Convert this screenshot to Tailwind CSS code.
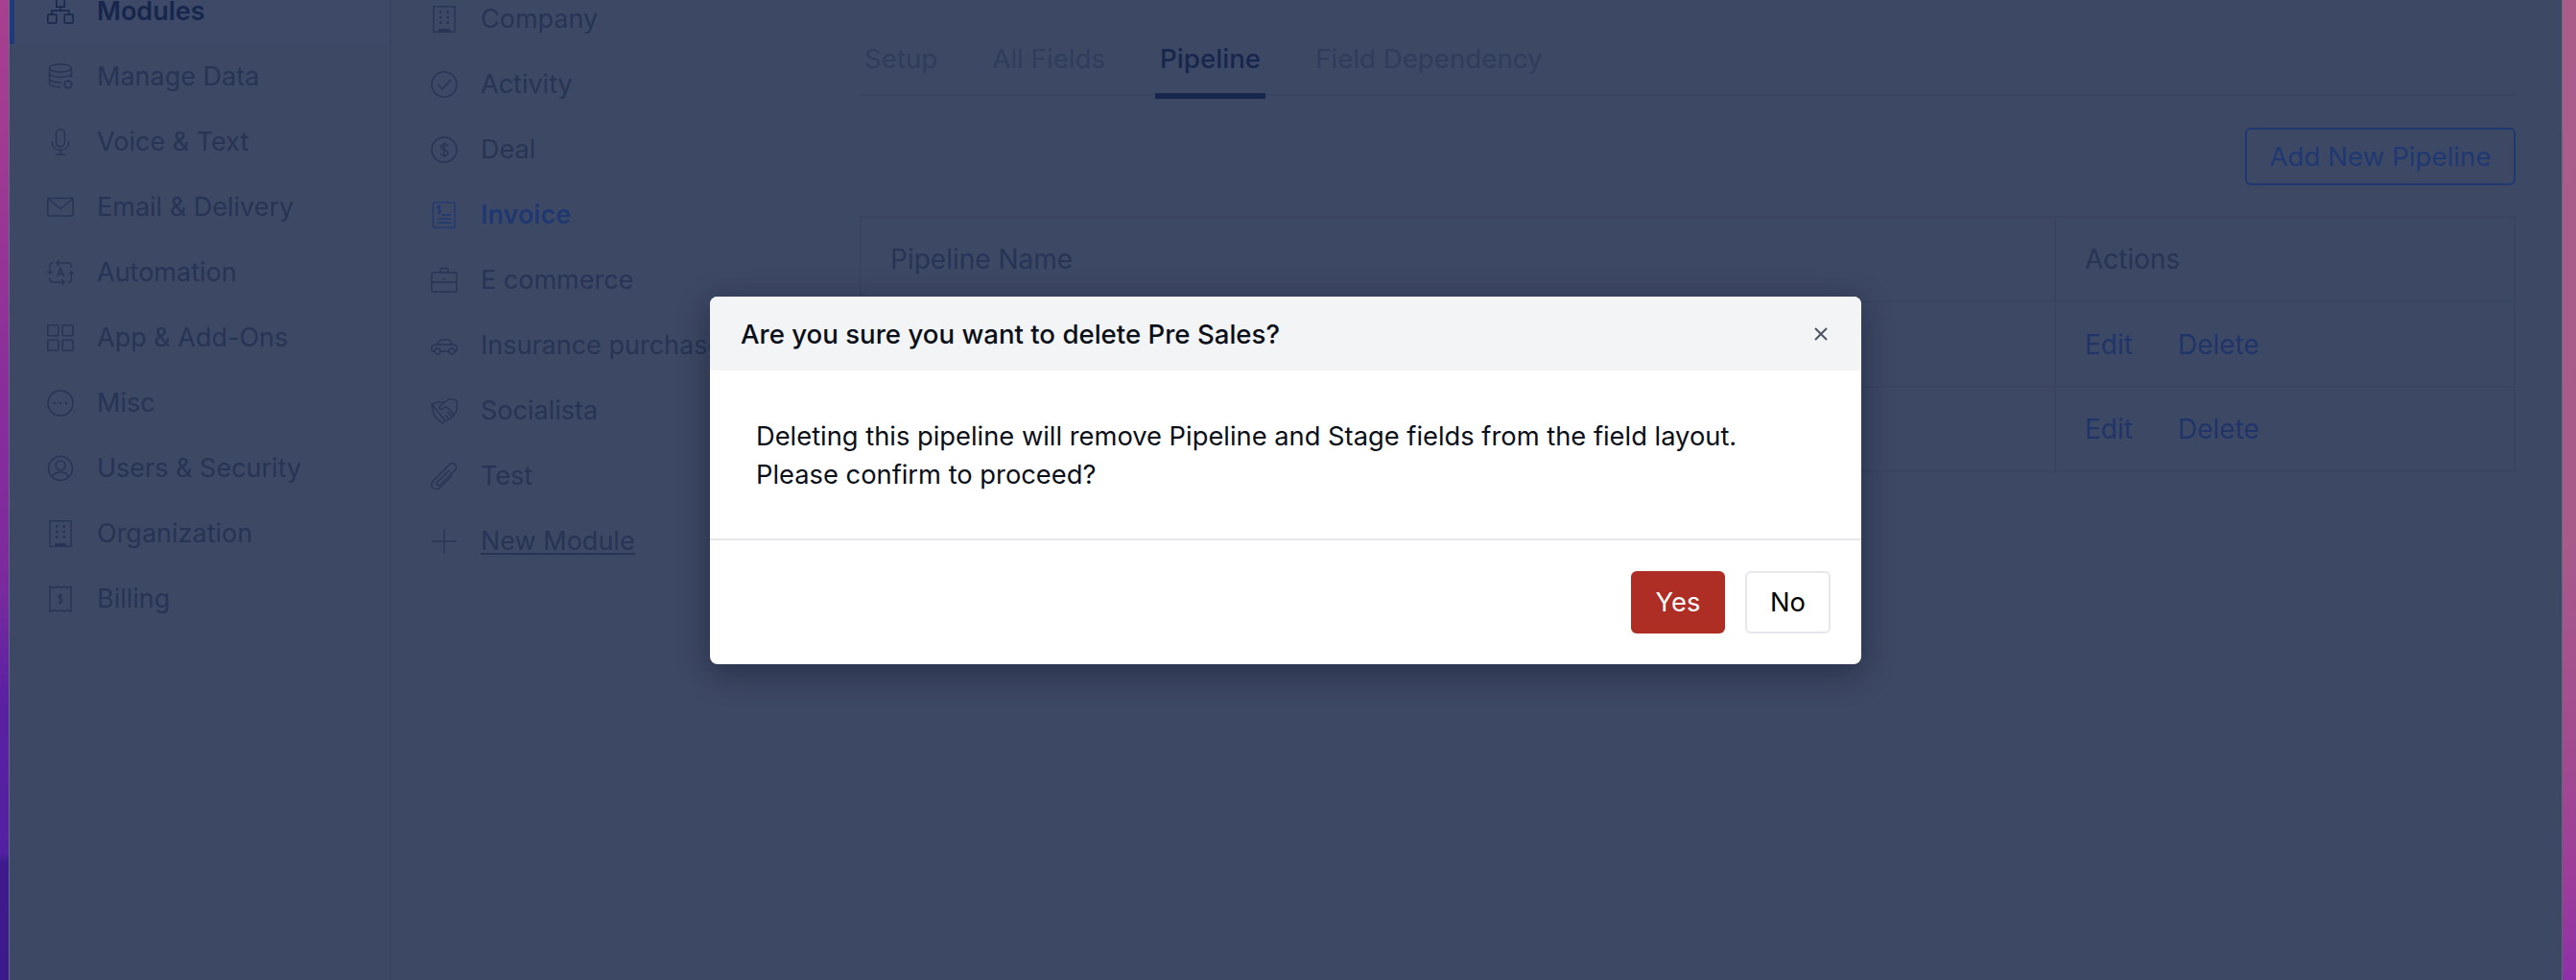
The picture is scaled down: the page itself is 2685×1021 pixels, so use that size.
<!DOCTYPE html>
<html lang="en">
<head>
    <meta charset="UTF-8">
    <meta name="viewport" content="width=device-width, initial-scale=1.0">
    <title>Pipeline settings</title>
    <script src="https://cdn.jsdelivr.net/npm/@tailwindcss/browser@4"></script>
</head>
<body class="font-['Inter',sans-serif] text-[27px] leading-[40px]">
    <div class="relative flex h-[1021px] w-[2685px] overflow-hidden">
        <!-- Wallpaper left -->
        <div class="w-[9px] shrink-0 bg-[linear-gradient(to_bottom,#a83f8f_0%,#a23a92_14%,#8a2d9c_40%,#7a2a9e_60%,#5a20a4_72%,#5420a2_87%,#3f1a8e_88%,#3d1a8c_100%)]"></div>

        <!-- App panel -->
        <div class="flex flex-1 bg-[#3d4864] border-l border-r border-l-[#5f7089] border-r-[#5e6a7a]">
            <!-- Settings nav -->
            <nav class="w-[398px] shrink-0 border-r-2 border-[#3a4460] text-[#273455]">
                <div class="-mt-[22px]">
                    <div class="flex items-center h-[68px] pl-[34px] gap-[24px] border-l-[5px] border-[#1f3a78] bg-[#3d4967] font-semibold text-[#17264c]">
                        <svg class="w-[28px] h-[28px] shrink-0 fill-none stroke-current stroke-[1.5]" viewBox="0 0 28 28"><rect x="9.8" y="0.8" width="8.4" height="8.4"/><path d="M14 9.2V13M5 17V13H23V17"/><rect x="0.8" y="17" width="9" height="9" rx="1"/><rect x="18.2" y="17" width="9" height="9" rx="1"/></svg>
                        <span>Modules</span>
                    </div>
                    <div class="flex items-center h-[68px] pl-[39px] gap-[24px]">
                        <svg class="w-[28px] h-[28px] shrink-0 fill-none stroke-current stroke-[1.4]" viewBox="0 0 28 28"><ellipse cx="14" cy="5" rx="11.5" ry="4"/><path d="M2.5 5V21C2.5 23 6 24.4 14 25M25.5 5V15M2.5 10.5C2.5 13 8 14.5 14 14.5S25.5 13 25.5 10.5M2.5 16C2.5 18.5 8 20 15 20"/><circle cx="22" cy="22" r="3.5"/><path d="M22 17V18.5M22 25.5V27M17 22H18.5M25.5 22H27M18.6 18.6L19.6 19.6M24.4 24.4L25.4 25.4M18.6 25.4L19.6 24.4M24.4 19.6L25.4 18.6"/></svg>
                        <span>Manage Data</span>
                    </div>
                    <div class="flex items-center h-[68px] pl-[39px] gap-[24px]">
                        <svg class="w-[28px] h-[28px] shrink-0 fill-none stroke-current stroke-[1.4]" viewBox="0 0 28 28"><rect x="9.5" y="0.8" width="9" height="18" rx="4.5"/><path d="M5.5 13V15C5.5 19.5 9 22.3 14 22.3S22.5 19.5 22.5 15V13M14 22.3V27M8.5 27H19.5"/></svg>
                        <span>Voice &amp; Text</span>
                    </div>
                    <div class="flex items-center h-[68px] pl-[39px] gap-[24px]">
                        <svg class="w-[28px] h-[28px] shrink-0 fill-none stroke-current stroke-[1.5]" viewBox="0 0 28 28"><rect x="0.8" y="4.5" width="26.4" height="18.5" rx="1.5"/><path d="M1.5 5.5L14 15.5L26.5 5.5"/></svg>
                        <span>Email &amp; Delivery</span>
                    </div>
                    <div class="flex items-center h-[68px] pl-[39px] gap-[24px]">
                        <svg class="w-[28px] h-[28px] shrink-0 fill-none stroke-current stroke-[1.3]" viewBox="0 0 28 28"><path d="M10 4H22C25 4 25.5 6 25.5 9M12.5 1L10 4L12.5 7M18 24H6C3 24 3 22 3 19M15.5 27L18 24L15.5 21M3 15V7C3 5 4 4 6 4M0.5 12.5L3 15L5.5 12.5M25.5 13V21C25.5 23 25 24 22 24M23 15.5L25.5 13L28 15.5"/><path d="M10.5 18.5L14 9.5L17.5 18.5M11.7 15.5H16.3"/></svg>
                        <span>Automation</span>
                    </div>
                    <div class="flex items-center h-[68px] pl-[39px] gap-[24px]">
                        <svg class="w-[28px] h-[28px] shrink-0 fill-none stroke-current stroke-[1.5]" viewBox="0 0 28 28"><rect x="0.8" y="0.8" width="11" height="11" rx="1"/><rect x="16.2" y="0.8" width="11" height="11" rx="1"/><rect x="0.8" y="16.2" width="11" height="11" rx="1"/><rect x="16.2" y="16.2" width="11" height="11" rx="1"/></svg>
                        <span>App &amp; Add-Ons</span>
                    </div>
                    <div class="flex items-center h-[68px] pl-[39px] gap-[24px]">
                        <svg class="w-[28px] h-[28px] shrink-0 fill-none stroke-current stroke-[1.5]" viewBox="0 0 28 28"><circle cx="14" cy="14" r="13"/><g class="fill-current stroke-0"><circle cx="8" cy="14" r="1.3"/><circle cx="14" cy="14" r="1.3"/><circle cx="20" cy="14" r="1.3"/></g></svg>
                        <span>Misc</span>
                    </div>
                    <div class="flex items-center h-[68px] pl-[39px] gap-[24px]">
                        <svg class="w-[28px] h-[28px] shrink-0 fill-none stroke-current stroke-[1.5]" viewBox="0 0 28 28"><circle cx="14" cy="14" r="12.5"/><circle cx="14" cy="11" r="5"/><path d="M5.5 23C7 19 10 18 14 18S21 19 22.5 23"/></svg>
                        <span>Users &amp; Security</span>
                    </div>
                    <div class="flex items-center h-[68px] pl-[39px] gap-[24px]">
                        <svg class="w-[28px] h-[28px] shrink-0 fill-none stroke-current stroke-[1.4]" viewBox="0 0 28 28"><rect x="3" y="0.8" width="22" height="26.4"/><path d="M8 25.5H20" class="stroke-[3]"/><path d="M9 6.5H11.5M16.5 6.5H19M9 12H11.5M16.5 12H19M9 17.5H11.5M16.5 17.5H19" class="stroke-[2.6]"/></svg>
                        <span>Organization</span>
                    </div>
                    <div class="flex items-center h-[68px] pl-[39px] gap-[24px]">
                        <svg class="w-[28px] h-[28px] shrink-0 fill-none stroke-current stroke-[1.4]" viewBox="0 0 28 28"><path d="M3 1L7 2.5L11 1L14 2.5L18 1L21 2.5L25 1V27L21 25.5L18 27L14 25.5L11 27L7 25.5L3 27Z"/><path d="M16 10.5C15 9.5 12 9.5 12 11.5S16 13.5 16 15.7S13 18.5 12 17.5M14 8.5V19.5"/></svg>
                        <span>Billing</span>
                    </div>
                </div>
            </nav>

            <!-- Module list -->
            <aside class="w-[488px] shrink-0 text-[#273455]">
                <div class="-mt-[14px] whitespace-nowrap">
                    <div class="flex items-center h-[68px] pl-[41px] gap-[24px]">
                        <svg class="w-[28px] h-[28px] shrink-0 fill-none stroke-current stroke-[1.4]" viewBox="0 0 28 28"><rect x="3" y="0.8" width="22" height="26.4"/><path d="M8 25.5H20" class="stroke-[3]"/><path d="M9 6.5H11.5M16.5 6.5H19M9 12H11.5M16.5 12H19M9 17.5H11.5M16.5 17.5H19" class="stroke-[2.6]"/></svg>
                        <span>Company</span>
                    </div>
                    <div class="flex items-center h-[68px] pl-[41px] gap-[24px]">
                        <svg class="w-[28px] h-[28px] shrink-0 fill-none stroke-current stroke-[1.4]" viewBox="0 0 28 28"><circle cx="14" cy="14" r="13"/><path d="M8 14.5L12 19L21 9"/></svg>
                        <span>Activity</span>
                    </div>
                    <div class="flex items-center h-[68px] pl-[41px] gap-[24px]">
                        <svg class="w-[28px] h-[28px] shrink-0 fill-none stroke-current stroke-[1.4]" viewBox="0 0 28 28"><circle cx="14" cy="14" r="13"/><path d="M18 10C17 8 10.5 8 10.5 11S18 14 18 17.5S11 20.5 10 18M14 6V22"/></svg>
                        <span>Deal</span>
                    </div>
                    <div class="flex items-center h-[68px] pl-[41px] gap-[24px] font-semibold text-[#1f3872]">
                        <svg class="w-[28px] h-[28px] shrink-0 fill-none stroke-current stroke-[1.3]" viewBox="0 0 28 28"><rect x="2.5" y="0.8" width="22.5" height="26.4" rx="1"/><path d="M10.5 5.5C9.5 4.5 7 4.5 7 6.3S10.5 8 10.5 10S8 12.3 7 11.3M8.8 3.5V13.5M11 14H21M7 18H21.5M7 22H21.5"/></svg>
                        <span>Invoice</span>
                    </div>
                    <div class="flex items-center h-[68px] pl-[41px] gap-[24px]">
                        <svg class="w-[28px] h-[28px] shrink-0 fill-none stroke-current stroke-[1.4]" viewBox="0 0 28 28"><rect x="1" y="6" width="26" height="20" rx="1.5"/><path d="M10 6V3C10 2 10.5 1.5 11.5 1.5H16.5C17.5 1.5 18 2 18 3V6M1 16H27M12.5 13H15.5"/></svg>
                        <span>E commerce</span>
                    </div>
                    <div class="flex items-center h-[68px] pl-[41px] gap-[24px]">
                        <svg class="w-[28px] h-[28px] shrink-0 fill-none stroke-current stroke-[1.3]" viewBox="0 0 28 28"><path d="M4 20H2C1 20 1 19 1 17C1 14 3 13 6 13L10 8.5C10.5 8 11 8 12 8H18C19 8 19.5 8.3 20 9L23 13C26 13.5 27.3 14.5 27.3 17C27.3 19 27 20 26 20H25M10 20H19M6 13H23"/><circle cx="7" cy="20" r="3"/><circle cx="22" cy="20" r="3"/></svg>
                        <span>Insurance purchase</span>
                    </div>
                    <div class="flex items-center h-[68px] pl-[41px] gap-[24px]">
                        <svg class="w-[28px] h-[28px] shrink-0 fill-none stroke-current stroke-[1.3]" viewBox="0 0 28 28"><path d="M1 7L8 5C10 4.5 12 5 14 5.5L19 1.5C21 2 25 2 27 3C27.5 7 27.5 13 26 16L23 18.5M14 5.5L9 10C8.5 11.5 10.5 13 12.5 12L16 9.5L24 17.5C25 19 23 21 21.5 19.5L17.5 15.5M21.5 19.5C22 21.5 20 23 18.5 22L15 18.5M18.5 22C18.5 24 16.5 25 15 24L12 21M15 24C14 26 12.5 27 11 26L5 21C3 18 1.5 13 1 7Z"/></svg>
                        <span>Socialista</span>
                    </div>
                    <div class="flex items-center h-[68px] pl-[41px] gap-[24px]">
                        <svg class="w-[28px] h-[28px] shrink-0 fill-none stroke-current stroke-[1.4]" viewBox="0 0 28 28"><path transform="rotate(45 14 14)" d="M13.5 6V23.5A2 2 0 0 0 17.5 23.5V1.5A4 4 0 0 0 9.5 1.5V26A5 5 0 0 0 19.5 26V8"/></svg>
                        <span>Test</span>
                    </div>
                    <div class="flex items-center h-[68px] pl-[41px] gap-[24px]">
                        <svg class="w-[28px] h-[28px] shrink-0 fill-none stroke-current stroke-[1.3]" viewBox="0 0 28 28"><path d="M14 1V27M1 14H27"/></svg>
                        <span class="underline decoration-2 underline-offset-[3px]">New Module</span>
                    </div>
                </div>
            </aside>

            <!-- Main content -->
            <main class="flex-1 pr-[48px] min-w-0 text-[28px]">
                <!-- Tabs -->
                <div class="flex gap-[57px] h-[100px] pt-[41px] pl-[5px] border-b-2 border-[#3a4460] text-[#303c5b] text-[27.7px]">
                    <span>Setup</span>
                    <span>All Fields</span>
                    <span class="relative font-medium text-[#17264c]">Pipeline
                        <span class="absolute -left-[5px] -right-[5px] top-[56px] h-[6px] bg-[#17264c]"></span>
                    </span>
                    <span>Field Dependency</span>
                </div>

                <div class="flex justify-end mt-[33px]">
                    <button class="h-[60px] w-[282px] border-2 border-[#1f3872] rounded-[6px] text-[#1f3872] text-[27.7px]">Add New Pipeline</button>
                </div>

                <!-- Pipelines -->
                <div class="mt-[32px] border-2 border-[#3a4460] text-[#273455]">
                    <div class="flex h-[88px] items-center border-b-2 border-[#3a4460]">
                        <div class="flex-1 pl-[30px]">Pipeline Name</div>
                        <div class="w-[479px] h-full flex items-center pl-[30px] border-l-2 border-[#3a4460]">Actions</div>
                    </div>
                    <div class="flex h-[89px] items-center border-b-2 border-[#3a4460]">
                        <div class="flex-1"></div>
                        <div class="w-[479px] h-full flex items-center gap-[47px] pl-[30px] border-l-2 border-[#3a4460] text-[#1f3569]">
                            <span>Edit</span>
                            <span>Delete</span>
                        </div>
                    </div>
                    <div class="flex h-[86px] items-center">
                        <div class="flex-1"></div>
                        <div class="w-[479px] h-full flex items-center gap-[47px] pl-[30px] border-l-2 border-[#3a4460] text-[#1f3569]">
                            <span>Edit</span>
                            <span>Delete</span>
                        </div>
                    </div>
                </div>
            </main>
        </div>

        <!-- Wallpaper right -->
        <div class="w-[14px] shrink-0 bg-[linear-gradient(to_bottom,#aa5d8b_0%,#a85a8b_55%,#a34c8f_75%,#9c3d9b_90%,#8f30a8_100%)]"></div>

        <!-- Delete dialog -->
        <div class="absolute left-[740px] top-[309px] w-[1200px] h-[383px] flex flex-col bg-white rounded-[8px] overflow-hidden shadow-[0_8px_32px_rgba(10,15,35,0.45)] text-[#0b0f19] text-[27.3px]">
            <div class="flex items-center justify-between h-[77px] shrink-0 pl-[32px] pr-[34px] bg-[#f3f4f6]">
                <h2 class="font-medium text-[27.6px]">Are you sure you want to delete Pre Sales?</h2>
                <svg class="w-[16px] h-[16px] fill-none stroke-[#4b5563] stroke-2" viewBox="0 0 16 16"><path d="M2 2L14 14M14 2L2 14"/></svg>
            </div>
            <div class="h-[177px] shrink-0 pt-[49px] pl-[48px] border-b-2 border-[#e5e7eb]">
                <p>Deleting this pipeline will remove Pipeline and Stage fields from the field layout.</p>
                <p>Please confirm to proceed?</p>
            </div>
            <div class="flex justify-end gap-[21px] pt-[32px] pr-[32px]">
                <button class="w-[98px] h-[65px] rounded-[6px] bg-[#ae2e26] text-white">Yes</button>
                <button class="w-[89px] h-[65px] rounded-[6px] bg-white border-2 border-[#e5e7eb] text-black">No</button>
            </div>
        </div>
    </div>
</body>
</html>
